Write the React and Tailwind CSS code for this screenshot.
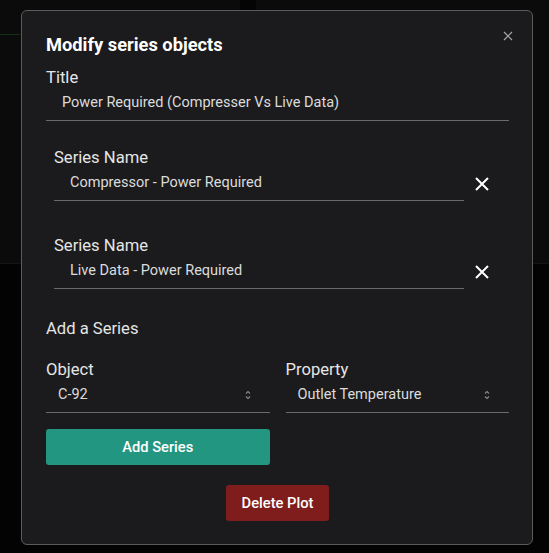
import React from "react";

const font = { fontFamily: "Roboto, 'Noto Sans', sans-serif" };

const CloseIcon = ({ className }) => (
  <svg viewBox="0 0 10 10" className={className} fill="none" stroke="currentColor" strokeWidth="1.2">
    <path d="M1 1L9 9M9 1L1 9" />
  </svg>
);

const RemoveIcon = () => (
  <svg viewBox="0 0 14 14" className="w-[14px] h-[14px]" fill="none" stroke="currentColor" strokeWidth="2">
    <path d="M1 1L13 13M13 1L1 13" />
  </svg>
);

const Chevrons = () => (
  <svg viewBox="0 0 6 10" className="w-[6px] h-[10px] text-[#8a8a8a]" fill="none" stroke="currentColor" strokeWidth="1.1">
    <path d="M1 3.5L3 1.5L5 3.5M1 6.5L3 8.5L5 6.5" />
  </svg>
);

const Field = ({ label, value }) => (
  <div className="flex flex-col">
    <label className="text-[16.6px] leading-6 text-[#e6e6e6]">{label}</label>
    <div className="pt-[3px] pb-[7px] pl-4 border-b border-[#6a6a6a] text-[14.5px] leading-5 text-[#dcdcdc]">
      {value}
    </div>
  </div>
);

const SeriesRow = ({ value, className }) => (
  <div className={`flex items-start pl-2 ${className}`}>
    <div className="w-[410px]">
      <Field label="Series Name" value={value} />
    </div>
    <button className="ml-[11px] mt-[31px] text-white">
      <RemoveIcon />
    </button>
  </div>
);

const SelectField = ({ label, value }) => (
  <div className="flex flex-col">
    <label className="text-[16.6px] leading-6 text-[#e6e6e6]">{label}</label>
    <div className="flex items-center justify-between pt-[3px] pb-[7px] pl-3 pr-[19px] border-b border-[#6a6a6a] text-[14.5px] leading-5 text-[#dcdcdc]">
      <span>{value}</span>
      <Chevrons />
    </div>
  </div>
);

export default function App() {
  return (
    <div className="relative w-[549px] h-[553px] overflow-hidden bg-[#030303]" style={font}>
      {/* dashboard behind the dialog */}
      <div className="h-[264px] border-b border-[#151515] bg-[#0b0b0b] flex">
        <div className="w-[240px] relative">
          <div className="absolute left-0 top-[34px] w-[20px] h-px bg-[#123015]" />
        </div>
        <div className="w-[16px] bg-[#040404]" />
        <div className="flex-1" />
      </div>

      <div className="absolute left-[21px] top-[10px] w-[512px] rounded-md border border-[#5b5b5b] bg-[#1b1b1d] pt-[20px] pb-[23px] pl-[24px] pr-[23px]">
        <button className="absolute right-[19px] top-[20px] text-[#a8a8a8]">
          <CloseIcon className="w-[10px] h-[10px]" />
        </button>

        <h2 className="text-[18.3px] leading-[27px] font-bold text-white">Modify series objects</h2>

        <div className="mt-[8px]">
          <Field label="Title" value="Power Required (Compresser Vs Live Data)" />
        </div>

        <SeriesRow className="mt-[25px]" value="Compressor - Power Required" />
        <SeriesRow className="mt-[33px]" value="Live Data - Power Required" />

        <p className="mt-[28px] text-[16.6px] leading-6 text-[#e6e6e6]">Add a Series</p>

        <div className="mt-[17px] grid grid-cols-2 gap-4">
          <SelectField label="Object" value="C-92" />
          <SelectField label="Property" value="Outlet Temperature" />
          <button className="h-9 rounded-[3px] bg-[#239682] text-[14.7px] font-medium text-white">
            Add Series
          </button>
        </div>

        <div className="mt-5 flex justify-center">
          <button className="h-9 px-4 rounded-[3px] bg-[#7f1d1d] text-[14.7px] font-medium text-white">
            Delete Plot
          </button>
        </div>
      </div>
    </div>
  );
}
